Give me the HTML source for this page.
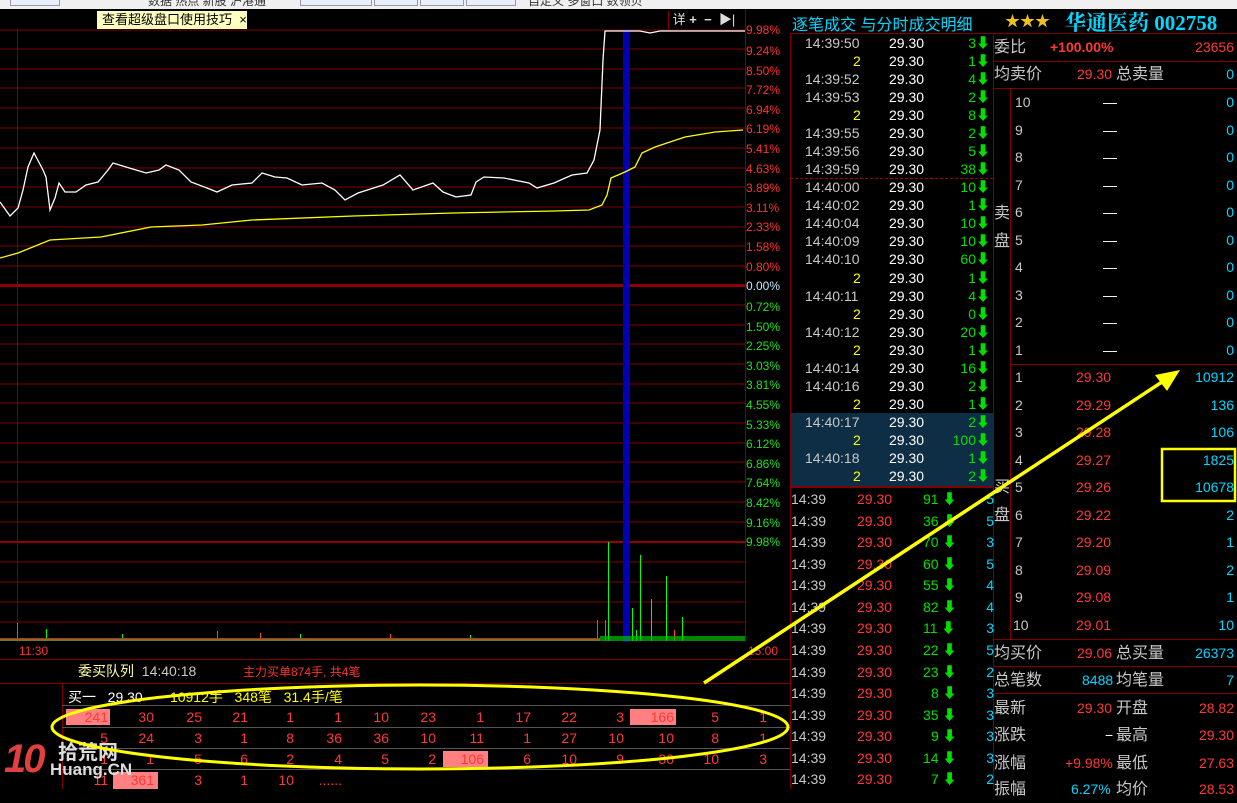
<!DOCTYPE html>
<html><head><meta charset="utf-8"><style>
*{margin:0;padding:0;box-sizing:border-box}
body{width:1237px;height:789px;background:#000;position:relative;overflow:hidden;font-family:"Liberation Sans","Noto Sans CJK SC",sans-serif;font-size:14px;color:#ddd}
.a{position:absolute;white-space:nowrap}
.r{text-align:right}
.c{color:#00d8ff}.g{color:#00e000}.y{color:#ffff00}.rd{color:#ff3838}.w{color:#fff}.gr{color:#c8c8c8}
.tk div{position:absolute;height:18px;line-height:18px;width:203px;left:0}
.tk span{position:absolute}
.ob div{position:absolute;left:0;width:244px;height:27px;line-height:27px}
.ob span{position:absolute}
.bt span{position:absolute;width:46px;text-align:right;color:#ff3838;font-size:14px}
</style></head><body>
<div class="a" style="left:0;top:0;width:1237px;height:9px;background:#f0f0f0"></div>
<div class="a" style="left:10px;top:0;width:50px;height:6px;border:1px solid #99a;border-top:none;background:#e8eefa"></div>
<div class="a" style="left:148px;top:0;width:136px;height:8px;overflow:hidden;font-size:12px;line-height:2px;color:#333">数据 热点 新股 沪港通</div>
<div class="a" style="left:300px;top:0;width:72px;height:6px;border:1px solid #99a;border-top:none;background:#e8eefa"></div>
<div class="a" style="left:374px;top:0;width:44px;height:6px;border:1px solid #99a;border-top:none;background:#e8eefa"></div>
<div class="a" style="left:420px;top:0;width:44px;height:6px;border:1px solid #99a;border-top:none;background:#e8eefa"></div>
<div class="a" style="left:466px;top:0;width:50px;height:6px;border:1px solid #99a;border-top:none;background:#e8eefa"></div>
<div class="a" style="left:528px;top:0;width:130px;height:8px;overflow:hidden;font-size:12px;line-height:2px;color:#333">自定义 多窗口 数领贝</div>

<svg class="a" style="left:0;top:9px" width="790" height="650" viewBox="0 9 790 650">
<g stroke="#800000" stroke-width="1">
<line x1="0" y1="30" x2="745" y2="30"/><line x1="0" y1="49" x2="745" y2="49"/><line x1="0" y1="69" x2="745" y2="69"/><line x1="0" y1="88" x2="745" y2="88"/><line x1="0" y1="108" x2="745" y2="108"/><line x1="0" y1="128" x2="745" y2="128"/><line x1="0" y1="148" x2="745" y2="148"/><line x1="0" y1="168" x2="745" y2="168"/><line x1="0" y1="187" x2="745" y2="187"/><line x1="0" y1="207" x2="745" y2="207"/><line x1="0" y1="227" x2="745" y2="227"/><line x1="0" y1="246" x2="745" y2="246"/><line x1="0" y1="266" x2="745" y2="266"/>
<line x1="0" y1="305" x2="745" y2="305"/><line x1="0" y1="325" x2="745" y2="325"/><line x1="0" y1="344" x2="745" y2="344"/><line x1="0" y1="364" x2="745" y2="364"/><line x1="0" y1="384" x2="745" y2="384"/><line x1="0" y1="403" x2="745" y2="403"/><line x1="0" y1="423" x2="745" y2="423"/><line x1="0" y1="443" x2="745" y2="443"/><line x1="0" y1="462" x2="745" y2="462"/><line x1="0" y1="482" x2="745" y2="482"/><line x1="0" y1="502" x2="745" y2="502"/><line x1="0" y1="522" x2="745" y2="522"/>
<line x1="0" y1="562" x2="745" y2="562"/><line x1="0" y1="582" x2="745" y2="582"/><line x1="0" y1="602" x2="745" y2="602"/><line x1="0" y1="622" x2="745" y2="622"/>
<line x1="17.5" y1="30" x2="17.5" y2="642"/><line x1="745.5" y1="9" x2="745.5" y2="642"/>
</g>
<rect x="0" y="284" width="745" height="3" fill="#900000"/>
<rect x="0" y="541" width="745" height="2" fill="#900000"/>
<rect x="623" y="30" width="7" height="612" fill="#0000b0"/>
<g stroke="#00ff00" stroke-width="1">
<line x1="608.5" y1="542" x2="608.5" y2="641"/><line x1="640.5" y1="555" x2="640.5" y2="641"/><line x1="632.5" y1="608" x2="632.5" y2="641"/><line x1="651.5" y1="599" x2="651.5" y2="641"/><line x1="666.5" y1="576" x2="666.5" y2="641"/><line x1="682.5" y1="617" x2="682.5" y2="641"/><line x1="636.5" y1="630" x2="636.5" y2="641"/><line x1="46.5" y1="629" x2="46.5" y2="641"/><line x1="122.5" y1="634" x2="122.5" y2="641"/><line x1="300.5" y1="634" x2="300.5" y2="641"/><line x1="470.5" y1="635" x2="470.5" y2="641"/>
</g>
<g stroke="#ff4040"><line x1="597.5" y1="620" x2="597.5" y2="641"/><line x1="605.5" y1="620" x2="605.5" y2="641"/><line x1="17.5" y1="623" x2="17.5" y2="641"/><line x1="217.5" y1="631" x2="217.5" y2="641"/><line x1="260.5" y1="633" x2="260.5" y2="641"/><line x1="674.5" y1="630" x2="674.5" y2="641"/><line x1="390.5" y1="634" x2="390.5" y2="641"/></g>
<rect x="0" y="638" width="600" height="3" fill="#c03020"/>
<rect x="0" y="639" width="600" height="2" fill="#20c020" opacity=".5"/>
<rect x="600" y="636" width="145" height="5" fill="#00c000" opacity=".7"/>
<polyline fill="none" stroke="#ffff00" stroke-width="1.3" points="0,258 18,253 50,240 101,237 151,227 202,225 252,220 353,216 453,213 554,211 589,210 602,205 607,195 611,178 625,172 635,167 642,153 655,147 685,137 715,132 743,130"/>
<polyline fill="none" stroke="#fff" stroke-width="1.3" points="0,202 10,216 18,208 23,190 28,167 34,153 43,170 46,177 50,210 55,198 59,183 65,192 76,192 86,185 98,182 108,170 113,163 126,167 146,173 159,170 166,165 179,170 191,182 207,188 217,192 232,185 252,183 262,173 275,177 287,178 302,185 322,183 335,190 345,200 358,193 383,185 400,175 413,190 433,183 443,192 456,197 471,195 476,182 484,177 504,178 529,183 537,188 554,183 572,175 587,173 594,160 600,130 603,60 605,31 640,31 650,33 660,31 745,31"/>
</svg>
<div class="a" style="left:746px;top:23px;font-size:12px;line-height:14px;color:#ff3030">9.98%</div>
<div class="a" style="left:746px;top:42px;font-size:12px;line-height:19.6px;color:#ff3030">9.24%<br>8.50%<br>7.72%<br>6.94%<br>6.19%<br>5.41%<br>4.63%<br>3.89%<br>3.11%<br>2.33%<br>1.58%<br>0.80%</div>
<div class="a" style="left:746px;top:279px;font-size:12px;color:#c8e8ff">0.00%</div>
<div class="a" style="left:746px;top:298px;font-size:12px;line-height:19.6px;color:#20e020">0.72%<br>1.50%<br>2.25%<br>3.03%<br>3.81%<br>4.55%<br>5.33%<br>6.12%<br>6.86%<br>7.64%<br>8.42%<br>9.16%<br>9.98%</div>
<div class="a" style="left:97px;top:11px;width:150px;height:18px;background:#ffffc0;color:#000;font-size:13px;line-height:18px;padding-left:5px">查看超级盘口使用技巧&nbsp;&nbsp;×</div>
<div class="a" style="left:668px;top:11px;width:76px;height:18px;color:#ddd;font-size:13px;line-height:18px;border-left:1px solid #800000">&nbsp;详 <b>+</b>&nbsp; <b>−</b>&nbsp; ▶|</div>
<div class="a" style="left:19px;top:644px;font-size:12px;color:#ff3030">11:30</div>
<div class="a" style="left:748px;top:644px;font-size:12px;color:#ff3030">15:00</div>
<div class="a" style="left:0;top:659px;width:790px;height:1px;background:#800000"></div>
<div class="a" style="left:78px;top:661px;font-size:14px;color:#ffffa0">委买队列&nbsp;&nbsp;<span class="gr">14:40:18</span></div>
<div class="a" style="left:243px;top:663px;font-size:12px;color:#ff3030">主力买单874手, 共4笔</div>
<div class="a" style="left:0;top:683px;width:790px;height:1px;background:#800000"></div>
<div class="a" style="left:62px;top:683px;width:1px;height:106px;background:#800000"></div>
<div class="a" style="left:62px;top:705px;width:728px;height:1px;background:#555"></div>
<div class="a" style="left:62px;top:727px;width:728px;height:1px;background:#555"></div>
<div class="a" style="left:62px;top:748px;width:728px;height:1px;background:#555"></div>
<div class="a" style="left:62px;top:769px;width:728px;height:1px;background:#555"></div>
<div class="a" style="left:68px;top:687px;font-size:14px;color:#fff">买一&nbsp;&nbsp;&nbsp;<span class="w">29.30</span>&nbsp;&nbsp;&nbsp;&nbsp;&nbsp;&nbsp;&nbsp;<span class="y">10912手&nbsp;&nbsp; 348笔&nbsp;&nbsp; 31.4手/笔</span></div>
<div class="a" style="left:66px;top:709px;width:44px;height:16px;background:#ff8080"></div>
<div class="a" style="left:630px;top:709px;width:46px;height:16px;background:#ff8080"></div>
<div class="a" style="left:443px;top:751px;width:45px;height:16px;background:#ff8080"></div>
<div class="a" style="left:113px;top:772px;width:45px;height:17px;background:#ff8080"></div>
<div class="bt">
<div class="a" style="left:0;top:709px;width:790px"><span style="left:62px">241</span><span style="left:108px">30</span><span style="left:156px">25</span><span style="left:202px">21</span><span style="left:248px">1</span><span style="left:296px">1</span><span style="left:343px">10</span><span style="left:390px">23</span><span style="left:438px">1</span><span style="left:485px">17</span><span style="left:531px">22</span><span style="left:578px">3</span><span style="left:628px">166</span><span style="left:673px">5</span><span style="left:721px">1</span></div>
<div class="a" style="left:0;top:730px;width:790px"><span style="left:62px">5</span><span style="left:108px">24</span><span style="left:156px">3</span><span style="left:202px">1</span><span style="left:248px">8</span><span style="left:296px">36</span><span style="left:343px">36</span><span style="left:390px">10</span><span style="left:438px">11</span><span style="left:485px">1</span><span style="left:531px">27</span><span style="left:578px">10</span><span style="left:628px">10</span><span style="left:673px">8</span><span style="left:721px">1</span></div>
<div class="a" style="left:0;top:751px;width:790px"><span style="left:62px">1</span><span style="left:108px">1</span><span style="left:156px">5</span><span style="left:202px">6</span><span style="left:248px">2</span><span style="left:296px">4</span><span style="left:343px">5</span><span style="left:390px">2</span><span style="left:438px">106</span><span style="left:485px">6</span><span style="left:531px">10</span><span style="left:578px">9</span><span style="left:628px">30</span><span style="left:673px">10</span><span style="left:721px">3</span></div>
<div class="a" style="left:0;top:772px;width:790px"><span style="left:62px">11</span><span style="left:108px">361</span><span style="left:156px">3</span><span style="left:202px">1</span><span style="left:248px">10</span><span style="left:296px">......</span></div>
</div>
<div class="a" style="left:4px;top:735px;font-size:40px;font-weight:bold;color:#e04040;font-style:italic;line-height:48px;letter-spacing:-3px">10</div>
<div class="a" style="left:58px;top:736px;font-size:20px;color:#ddd;font-weight:bold">拾荒网</div>
<div class="a" style="left:50px;top:760px;font-size:17px;color:#ddd;font-weight:bold">Huang.CN</div>

<div class="a c" style="left:792px;top:11px;font-size:16px">逐笔成交 与分时成交明细</div>
<div class="a" style="left:1005px;top:10px;font-size:15px;color:#f0c020">★★★</div>
<div class="a c" style="left:1065px;top:7px;font-size:21px;font-weight:bold;font-family:'Liberation Serif','Noto Serif CJK SC',serif">华通医药 002758</div>
<div class="a" style="left:790px;top:33px;width:447px;height:1px;background:#800000"></div>
<div class="a" style="left:790px;top:33px;width:1px;height:756px;background:#800000"></div>
<div class="a" style="left:993px;top:33px;width:1px;height:756px;background:#800000"></div>
<div class="a" style="left:790px;top:178px;width:203px;border-top:1px dashed #a00000"></div>
<div class="a" style="left:791px;top:413px;width:202px;height:73px;background:#0d2e44"></div>
<div class="a" style="left:790px;top:486px;width:203px;height:2px;background:#800000"></div>
<div class="a tk" style="left:791px;top:0;width:202px">
<div style="top:34px"><span class="gr" style="left:14px">14:39:50</span><span class="w" style="left:98px">29.30</span><span class="g r" style="right:4px">3⬇</span></div>
<div style="top:52px"><span class="y" style="left:62px">2</span><span class="w" style="left:98px">29.30</span><span class="g" style="right:4px">1⬇</span></div>
<div style="top:70px"><span class="gr" style="left:14px">14:39:52</span><span class="w" style="left:98px">29.30</span><span class="g" style="right:4px">4⬇</span></div>
<div style="top:88px"><span class="gr" style="left:14px">14:39:53</span><span class="w" style="left:98px">29.30</span><span class="g" style="right:4px">2⬇</span></div>
<div style="top:106px"><span class="y" style="left:62px">2</span><span class="w" style="left:98px">29.30</span><span class="g" style="right:4px">8⬇</span></div>
<div style="top:124px"><span class="gr" style="left:14px">14:39:55</span><span class="w" style="left:98px">29.30</span><span class="g" style="right:4px">2⬇</span></div>
<div style="top:142px"><span class="gr" style="left:14px">14:39:56</span><span class="w" style="left:98px">29.30</span><span class="g" style="right:4px">5⬇</span></div>
<div style="top:160px"><span class="gr" style="left:14px">14:39:59</span><span class="w" style="left:98px">29.30</span><span class="g" style="right:4px">38⬇</span></div>
<div style="top:178px"><span class="gr" style="left:14px">14:40:00</span><span class="w" style="left:98px">29.30</span><span class="g" style="right:4px">10⬇</span></div>
<div style="top:196px"><span class="gr" style="left:14px">14:40:02</span><span class="w" style="left:98px">29.30</span><span class="g" style="right:4px">1⬇</span></div>
<div style="top:214px"><span class="gr" style="left:14px">14:40:04</span><span class="w" style="left:98px">29.30</span><span class="g" style="right:4px">10⬇</span></div>
<div style="top:232px"><span class="gr" style="left:14px">14:40:09</span><span class="w" style="left:98px">29.30</span><span class="g" style="right:4px">10⬇</span></div>
<div style="top:250px"><span class="gr" style="left:14px">14:40:10</span><span class="w" style="left:98px">29.30</span><span class="g" style="right:4px">60⬇</span></div>
<div style="top:269px"><span class="y" style="left:62px">2</span><span class="w" style="left:98px">29.30</span><span class="g" style="right:4px">1⬇</span></div>
<div style="top:287px"><span class="gr" style="left:14px">14:40:11</span><span class="w" style="left:98px">29.30</span><span class="g" style="right:4px">4⬇</span></div>
<div style="top:305px"><span class="y" style="left:62px">2</span><span class="w" style="left:98px">29.30</span><span class="g" style="right:4px">0⬇</span></div>
<div style="top:323px"><span class="gr" style="left:14px">14:40:12</span><span class="w" style="left:98px">29.30</span><span class="g" style="right:4px">20⬇</span></div>
<div style="top:341px"><span class="y" style="left:62px">2</span><span class="w" style="left:98px">29.30</span><span class="g" style="right:4px">1⬇</span></div>
<div style="top:359px"><span class="gr" style="left:14px">14:40:14</span><span class="w" style="left:98px">29.30</span><span class="g" style="right:4px">16⬇</span></div>
<div style="top:377px"><span class="gr" style="left:14px">14:40:16</span><span class="w" style="left:98px">29.30</span><span class="g" style="right:4px">2⬇</span></div>
<div style="top:395px"><span class="y" style="left:62px">2</span><span class="w" style="left:98px">29.30</span><span class="g" style="right:4px">1⬇</span></div>
<div style="top:413px"><span class="gr" style="left:14px">14:40:17</span><span class="w" style="left:98px">29.30</span><span class="g" style="right:4px">2⬇</span></div>
<div style="top:431px"><span class="y" style="left:62px">2</span><span class="w" style="left:98px">29.30</span><span class="g" style="right:4px">100⬇</span></div>
<div style="top:449px"><span class="gr" style="left:14px">14:40:18</span><span class="w" style="left:98px">29.30</span><span class="g" style="right:4px">1⬇</span></div>
<div style="top:467px"><span class="y" style="left:62px">2</span><span class="w" style="left:98px">29.30</span><span class="g" style="right:4px">2⬇</span></div>
</div>
<div class="a tk" style="left:791px;top:0;width:202px">
<div style="top:490px"><span class="gr">14:39</span><span class="rd" style="left:66px">29.30</span><span class="g" style="left:132px">91 ⬇</span><span class="c" style="right:0">5</span></div>
<div style="top:512px"><span class="gr">14:39</span><span class="rd" style="left:66px">29.30</span><span class="g" style="left:132px">36 ⬇</span><span class="c" style="right:0">5</span></div>
<div style="top:533px"><span class="gr">14:39</span><span class="rd" style="left:66px">29.30</span><span class="g" style="left:132px">70 ⬇</span><span class="c" style="right:0">3</span></div>
<div style="top:555px"><span class="gr">14:39</span><span class="rd" style="left:66px">29.30</span><span class="g" style="left:132px">60 ⬇</span><span class="c" style="right:0">5</span></div>
<div style="top:576px"><span class="gr">14:39</span><span class="rd" style="left:66px">29.30</span><span class="g" style="left:132px">55 ⬇</span><span class="c" style="right:0">4</span></div>
<div style="top:598px"><span class="gr">14:39</span><span class="rd" style="left:66px">29.30</span><span class="g" style="left:132px">82 ⬇</span><span class="c" style="right:0">4</span></div>
<div style="top:619px"><span class="gr">14:39</span><span class="rd" style="left:66px">29.30</span><span class="g" style="left:132px">11 ⬇</span><span class="c" style="right:0">3</span></div>
<div style="top:641px"><span class="gr">14:39</span><span class="rd" style="left:66px">29.30</span><span class="g" style="left:132px">22 ⬇</span><span class="c" style="right:0">5</span></div>
<div style="top:663px"><span class="gr">14:39</span><span class="rd" style="left:66px">29.30</span><span class="g" style="left:132px">23 ⬇</span><span class="c" style="right:0">2</span></div>
<div style="top:684px"><span class="gr">14:39</span><span class="rd" style="left:66px">29.30</span><span class="g" style="left:140px">8 ⬇</span><span class="c" style="right:0">3</span></div>
<div style="top:706px"><span class="gr">14:39</span><span class="rd" style="left:66px">29.30</span><span class="g" style="left:132px">35 ⬇</span><span class="c" style="right:0">3</span></div>
<div style="top:727px"><span class="gr">14:39</span><span class="rd" style="left:66px">29.30</span><span class="g" style="left:140px">9 ⬇</span><span class="c" style="right:0">3</span></div>
<div style="top:749px"><span class="gr">14:39</span><span class="rd" style="left:66px">29.30</span><span class="g" style="left:132px">14 ⬇</span><span class="c" style="right:0">3</span></div>
<div style="top:770px"><span class="gr">14:39</span><span class="rd" style="left:66px">29.30</span><span class="g" style="left:140px">7 ⬇</span><span class="c" style="right:0">2</span></div>
</div>
<div class="a" style="left:993px;top:61px;width:244px;height:1px;background:#800000"></div>
<div class="a" style="left:993px;top:88px;width:244px;height:1px;background:#800000"></div>
<div class="a" style="left:1010px;top:89px;width:1px;height:550px;background:#800000"></div>
<div class="a" style="left:1010px;top:364px;width:227px;height:1px;background:#800000"></div>
<div class="a" style="left:993px;top:639px;width:244px;height:1px;background:#800000"></div>
<div class="a" style="left:993px;top:666px;width:244px;height:1px;background:#800000"></div>
<div class="a" style="left:993px;top:693px;width:244px;height:1px;background:#800000"></div>
<div class="a gr" style="left:994px;top:200px;font-size:16px;line-height:28px">卖<br>盘</div>
<div class="a gr" style="left:994px;top:474px;font-size:16px;line-height:28px">买<br>盘</div>
<div class="a ob" style="left:993px;top:0;width:244px;font-size:14px">
<div style="top:34px"><span class="gr" style="left:1px;font-size:16px">委比</span><span class="rd" style="left:57px;font-weight:bold">+100.00%</span><span class="rd" style="right:3px">23656</span></div>
<div style="top:61px"><span class="gr" style="left:1px;font-size:16px">均卖价</span><span class="rd" style="left:84px">29.30</span><span class="gr" style="left:123px;font-size:16px">总卖量</span><span class="c" style="right:3px">0</span></div>
<div style="top:89px"><span class="gr" style="left:22px">10</span><span class="w" style="left:110px">—</span><span class="c" style="right:3px">0</span></div>
<div style="top:117px"><span class="gr" style="left:22px">9</span><span class="w" style="left:110px">—</span><span class="c" style="right:3px">0</span></div>
<div style="top:144px"><span class="gr" style="left:22px">8</span><span class="w" style="left:110px">—</span><span class="c" style="right:3px">0</span></div>
<div style="top:172px"><span class="gr" style="left:22px">7</span><span class="w" style="left:110px">—</span><span class="c" style="right:3px">0</span></div>
<div style="top:199px"><span class="gr" style="left:22px">6</span><span class="w" style="left:110px">—</span><span class="c" style="right:3px">0</span></div>
<div style="top:227px"><span class="gr" style="left:22px">5</span><span class="w" style="left:110px">—</span><span class="c" style="right:3px">0</span></div>
<div style="top:254px"><span class="gr" style="left:22px">4</span><span class="w" style="left:110px">—</span><span class="c" style="right:3px">0</span></div>
<div style="top:282px"><span class="gr" style="left:22px">3</span><span class="w" style="left:110px">—</span><span class="c" style="right:3px">0</span></div>
<div style="top:309px"><span class="gr" style="left:22px">2</span><span class="w" style="left:110px">—</span><span class="c" style="right:3px">0</span></div>
<div style="top:337px"><span class="gr" style="left:22px">1</span><span class="w" style="left:110px">—</span><span class="c" style="right:3px">0</span></div>
<div style="top:364px"><span class="gr" style="left:22px">1</span><span class="rd" style="left:83px">29.30</span><span class="c" style="right:3px">10912</span></div>
<div style="top:392px"><span class="gr" style="left:22px">2</span><span class="rd" style="left:83px">29.29</span><span class="c" style="right:3px">136</span></div>
<div style="top:419px"><span class="gr" style="left:22px">3</span><span class="rd" style="left:83px">29.28</span><span class="c" style="right:3px">106</span></div>
<div style="top:447px"><span class="gr" style="left:22px">4</span><span class="rd" style="left:83px">29.27</span><span class="c" style="right:3px">1825</span></div>
<div style="top:474px"><span class="gr" style="left:22px">5</span><span class="rd" style="left:83px">29.26</span><span class="c" style="right:3px">10678</span></div>
<div style="top:502px"><span class="gr" style="left:22px">6</span><span class="rd" style="left:83px">29.22</span><span class="c" style="right:3px">2</span></div>
<div style="top:529px"><span class="gr" style="left:22px">7</span><span class="rd" style="left:83px">29.20</span><span class="c" style="right:3px">1</span></div>
<div style="top:557px"><span class="gr" style="left:22px">8</span><span class="rd" style="left:83px">29.09</span><span class="c" style="right:3px">2</span></div>
<div style="top:584px"><span class="gr" style="left:22px">9</span><span class="rd" style="left:83px">29.08</span><span class="c" style="right:3px">1</span></div>
<div style="top:612px"><span class="gr" style="left:20px">10</span><span class="rd" style="left:83px">29.01</span><span class="c" style="right:3px">10</span></div>
<div style="top:640px"><span class="gr" style="left:1px;font-size:16px">均买价</span><span class="rd" style="left:84px">29.06</span><span class="gr" style="left:123px;font-size:16px">总买量</span><span class="c" style="right:3px">26373</span></div>
<div style="top:667px"><span class="gr" style="left:1px;font-size:16px">总笔数</span><span class="c" style="left:89px">8488</span><span class="gr" style="left:123px;font-size:16px">均笔量</span><span class="c" style="right:3px">7</span></div>
<div style="top:695px"><span class="gr" style="left:1px;font-size:16px">最新</span><span class="rd" style="left:84px">29.30</span><span class="gr" style="left:123px;font-size:16px">开盘</span><span class="rd" style="right:3px">28.82</span></div>
<div style="top:722px"><span class="gr" style="left:1px;font-size:16px">涨跌</span><span class="w" style="left:112px">−</span><span class="gr" style="left:123px;font-size:16px">最高</span><span class="rd" style="right:3px">29.30</span></div>
<div style="top:750px"><span class="gr" style="left:1px;font-size:16px">涨幅</span><span class="rd" style="left:72px">+9.98%</span><span class="gr" style="left:123px;font-size:16px">最低</span><span class="rd" style="right:3px">27.63</span></div>
<div style="top:776px"><span class="gr" style="left:1px;font-size:16px">振幅</span><span class="c" style="left:78px">6.27%</span><span class="gr" style="left:123px;font-size:16px">均价</span><span class="rd" style="right:3px">28.53</span></div>
</div>
<svg class="a" style="left:0;top:0" width="1237" height="789">
<ellipse cx="420" cy="727" rx="368" ry="42" fill="none" stroke="#ffff00" stroke-width="3"/>
<line x1="704" y1="683" x2="1165" y2="380" stroke="#ffff00" stroke-width="3.5"/>
<polygon points="1180,370 1155,375 1167,391" fill="#ffff00"/>
<rect x="1162" y="449" width="73" height="52" fill="none" stroke="#ffff00" stroke-width="2.5"/>
</svg>
</body></html>
